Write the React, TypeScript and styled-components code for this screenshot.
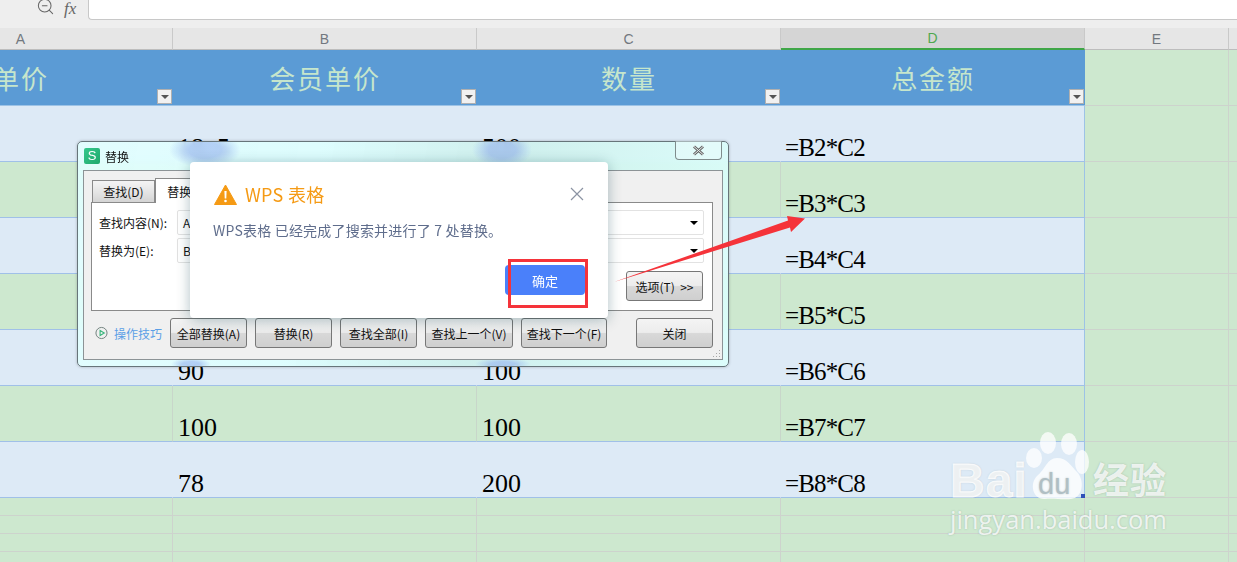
import React from "react";
import styled, { createGlobalStyle } from "styled-components";
import { ZoomOut } from "lucide-react";

const Global = createGlobalStyle`
  html, body { margin: 0; padding: 0; background: #cde8cf; }
  body { font-family: "Noto Sans CJK SC", "Liberation Sans", sans-serif; overflow: hidden; }
`;

const Page = styled.div`
  position: relative;
  width: 1237px;
  height: 562px;
  overflow: hidden;
  background: #cde8cf;
`;

const FormulaBar = styled.div`
  display: flex;
  height: 20px;
  background: #eeeeee;
`;
const BarTools = styled.div`
  width: 88px;
  flex: none;
  display: flex;
  align-items: flex-start;
  padding-left: 36px;
  box-sizing: border-box;
  gap: 9px;
  color: #666;
  svg { margin-top: -3px; }
`;
const Fx = styled.span`
  font: italic 17px/18px "Liberation Serif", serif;
  color: #666;
`;
const FormulaInput = styled.div`
  flex: 1;
  background: #fff;
  border-left: 1px solid #c8c8c8;
  border-bottom: 1px solid #c8c8c8;
  border-bottom-left-radius: 4px;
`;

const Sheet = styled.div`
  margin-left: -131px;
`;
const Columns = "304px 304px 304px 304px 144px 200px";

const Strip = styled.div`
  display: grid;
  grid-template-columns: ${Columns};
  height: 30px;
  align-items: end;
  background: #eeeeee;
`;
const ColHead = styled.div<{ $active?: boolean }>`
  height: 22px;
  box-sizing: border-box;
  display: flex;
  align-items: center;
  justify-content: center;
  font: 14px "Liberation Sans", sans-serif;
  color: ${(p) => (p.$active ? "#4fa84f" : "#72787f")};
  background: ${(p) => (p.$active ? "#d5d5d5" : "#e6e6e6")};
  border-right: 1px solid #c9c9c9;
  border-bottom: ${(p) => (p.$active ? "2px solid #3fa648" : "1px solid #bdbdbd")};
`;

const Row = styled.div<{ $h?: number }>`
  display: grid;
  grid-template-columns: ${Columns};
  height: ${(p) => p.$h ?? 56}px;
`;
const HeadCell = styled.div`
  position: relative;
  box-sizing: border-box;
  background: #5b9bd5;
  border-bottom: 1px solid #9dc3e6;
  color: #c6e6cc;
  font-size: 26px;
  letter-spacing: 1.9px;
  display: flex;
  align-items: center;
  justify-content: center;
`;
const FilterBtn = styled.span`
  position: absolute;
  right: 1px;
  bottom: 1px;
  width: 15px;
  height: 15px;
  box-sizing: border-box;
  background: #f1f1f1;
  border: 1px solid #b0b0b0;
  &::after {
    content: "";
    position: absolute;
    left: 3px;
    top: 5px;
    border-left: 4px solid transparent;
    border-right: 4px solid transparent;
    border-top: 4px solid #555;
  }
`;
const Cell = styled.div<{ $tone: "blue" | "green"; $tight?: boolean }>`
  box-sizing: border-box;
  display: flex;
  align-items: flex-end;
  padding: 0 0 0 ${(p) => (p.$tight ? 4 : 5)}px;
  background: ${(p) => (p.$tone === "blue" ? "#ddeaf6" : "#cde8cf")};
  border-bottom: 1px solid #a0c0e8;
  border-right: 1px solid ${(p) => (p.$tone === "blue" ? "#ddeaf6" : "#c8d6ca")};
  color: #000;
  font: ${(p) => (p.$tight ? 25 : 26)}px/26px "Liberation Serif", serif;
  letter-spacing: ${(p) => (p.$tight ? "-.85px" : "0")};
  white-space: pre;
`;
const LastCell = styled(Cell)`
  border-right-color: #9dc3e6;
`;
const Blank = styled.div`
  box-sizing: border-box;
  background: #cde8cf;
  border-bottom: 1px solid #cdd3cd;
  border-right: 1px solid #cdd3cd;
`;
const SelectionCorner = styled.span`
  position: absolute;
  left: 1081px;
  top: 494px;
  width: 4px;
  height: 4px;
  background: #3050b8;
`;

const OldDialog = styled.div`
  position: absolute;
  left: 77px;
  top: 141px;
  width: 652px;
  height: 226px;
  box-sizing: border-box;
  border: 1px solid #67757a;
  border-radius: 5px;
  background:
    radial-gradient(ellipse 36px 18px at 127px 8px, rgba(150, 180, 240, .6) 45%, transparent),
    radial-gradient(ellipse 30px 18px at 424px 8px, rgba(150, 180, 240, .6) 45%, transparent),
    radial-gradient(ellipse 20px 6px at 113px 222px, rgba(150, 180, 240, .6) 40%, transparent),
    radial-gradient(ellipse 28px 6px at 425px 222px, rgba(150, 180, 240, .6) 40%, transparent),
    linear-gradient(100deg, rgba(226,255,255,.9), rgba(222,255,255,.88) 35%, rgba(205,240,236,.9) 62%, rgba(220,255,252,.9) 100%);
  backdrop-filter: blur(3px);
  box-shadow: 0 0 3px rgba(0,0,0,.25);
`;
const TitleBar = styled.div`
  height: 28px;
  display: flex;
  align-items: center;
  padding-left: 6px;
  gap: 5px;
  font-size: 12px;
  color: #111;
  position: relative;
`;
const LogoS = styled.span`
  width: 16px;
  height: 16px;
  border-radius: 2px;
  background: linear-gradient(135deg, #35c88c, #1ea86c);
  color: #fff;
  font: 13px/16px "Liberation Sans", sans-serif;
  text-align: center;
`;
const CloseTop = styled.span`
  position: absolute;
  right: 6px;
  top: -1px;
  width: 47px;
  height: 19px;
  box-sizing: border-box;
  border: 1px solid #7f8c8c;
  border-top: none;
  border-radius: 0 0 4px 4px;
  background: rgba(240,250,250,.45);
  display: flex;
  align-items: center;
  justify-content: center;
`;
const Panel = styled.div`
  position: relative;
  margin-left: 5px;
  width: 640px;
  height: 190px;
  box-sizing: border-box;
  border: 1px solid #8c9396;
  background: #f0f0f0;
  padding-top: 7px;
`;
const Tabs = styled.div`
  display: flex;
  align-items: flex-end;
  height: 25px;
  padding-left: 8px;
`;
const Tab = styled.div<{ $on?: boolean }>`
  box-sizing: border-box;
  height: ${(p) => (p.$on ? 25 : 23)}px;
  width: ${(p) => (p.$on ? 64 : 63)}px;
  border: 1px solid #8a8a8a;
  border-bottom: ${(p) => (p.$on ? "none" : "1px solid #8a8a8a")};
  background: ${(p) => (p.$on ? "#fff" : "linear-gradient(#f4f4f4, #e4e4e4 55%, #d4d4d4)")};
  font-size: 12px;
  color: #111;
  display: flex;
  align-items: center;
  justify-content: center;
`;
const Content = styled.div`
  margin: -1px 0 0 7px;
  width: 622px;
  height: 109px;
  box-sizing: border-box;
  border: 1px solid #8a8a8a;
  background: #fff;
  padding: 7px 7px 0;
  display: flex;
  flex-direction: column;
  gap: 3px;
`;
const Field = styled.div`
  display: flex;
  align-items: center;
  height: 25px;
`;
const FieldLabel = styled.span`
  width: 78px;
  flex: none;
  font-size: 12px;
  color: #111;
`;
const FieldInput = styled.div`
  width: 527px;
  height: 25px;
  box-sizing: border-box;
  border: 1px solid #e2e2e2;
  border-radius: 2px;
  font-size: 12px;
  color: #111;
  display: flex;
  align-items: center;
  justify-content: space-between;
  padding: 0 5px;
  &::after {
    content: "";
    border-left: 4px solid transparent;
    border-right: 4px solid transparent;
    border-top: 4px solid #000;
  }
`;
const OptionRow = styled.div`
  display: flex;
  justify-content: flex-end;
  margin-top: 5px;
  padding-right: 2px;
`;
const Btn = styled.div<{ $w: number; $h?: number; $ml?: number }>`
  width: ${(p) => p.$w}px;
  height: ${(p) => p.$h ?? 30}px;
  margin-left: ${(p) => p.$ml ?? 0}px;
  flex: none;
  box-sizing: border-box;
  border: 1px solid #777;
  border-radius: 3px;
  background: linear-gradient(#f4f4f4, #ececec 48%, #d8d8d8 52%, #cfcfcf);
  font-size: 12px;
  color: #111;
  display: flex;
  align-items: center;
  justify-content: center;
  white-space: nowrap;
`;
const BottomRow = styled.div`
  display: flex;
  align-items: center;
  gap: 8px;
  padding-left: 11px;
  margin-top: 7px;
`;
const Help = styled.div`
  width: 67px;
  flex: none;
  display: flex;
  align-items: center;
  gap: 6px;
  font-size: 12px;
  color: #5b9fe6;
  white-space: nowrap;
`;
const Grip = styled.svg`
  position: absolute;
  right: 1px;
  bottom: 1px;
`;

const WpsDialog = styled.div`
  position: absolute;
  left: 190px;
  top: 162px;
  width: 418px;
  height: 156px;
  box-sizing: border-box;
  background: #fff;
  border-radius: 4px;
  box-shadow: 0 2px 14px rgba(0, 60, 70, .32);
  padding: 20px 23px 0 23px;
  display: flex;
  flex-direction: column;
`;
const WpsHead = styled.div`
  height: 24px;
  display: flex;
  align-items: center;
  gap: 8px;
  padding-left: 1px;
`;
const WpsTitle = styled.span`
  font-size: 18px;
  color: #f59a14;
  letter-spacing: .3px;
  flex: 1;
`;
const WpsClose = styled.svg`
  margin-right: 1px;
`;
const WpsMsg = styled.div`
  margin-top: 13px;
  height: 22px;
  font-size: 14px;
  line-height: 22px;
  color: #5f6d8c;
  letter-spacing: .2px;
  white-space: nowrap;
`;
const WpsFoot = styled.div`
  margin-top: 24px;
  display: flex;
  justify-content: flex-end;
`;
const OkBtn = styled.div`
  width: 80px;
  height: 30px;
  border-radius: 4px;
  background: #4a80fa;
  color: #fff;
  font-size: 13px;
  display: flex;
  align-items: center;
  justify-content: center;
`;

const RedBox = styled.div`
  position: absolute;
  left: 508px;
  top: 259px;
  width: 80px;
  height: 49px;
  box-sizing: border-box;
  border: 3px solid #f5333a;
`;
const Arrow = styled.svg`
  position: absolute;
  left: 610px;
  top: 210px;
`;

const Watermark = styled.div`
  position: absolute;
  left: 950px;
  top: 430px;
  width: 222px;
  color: rgba(255, 255, 255, .8);
  text-shadow: 0 0 2px rgba(90, 110, 110, .35);
`;
const MarkTop = styled.div`
  display: flex;
  align-items: flex-end;
  height: 72px;
`;
const MarkBai = styled.span`
  font: 900 48px/48px "Liberation Sans", sans-serif;
  letter-spacing: 1px;
  -webkit-text-stroke: 1px rgba(255, 255, 255, .8);
  width: 75px;
  margin-bottom: -3px;
`;
const MarkCn = styled.span`
  font-size: 36px;
  font-weight: 700;
  line-height: 40px;
  letter-spacing: 1px;
  margin-bottom: 4px;
`;
const MarkUrl = styled.div`
  font: 25.5px/30px "Open Sans", sans-serif;
  margin-top: 2px;
  white-space: nowrap;
`;

const rows: { b?: string; c?: string; d: string; tone: "blue" | "green" }[] = [
  { b: "18. 5", c: "500", d: "=B2*C2", tone: "blue" },
  { d: "=B3*C3", tone: "green" },
  { d: "=B4*C4", tone: "blue" },
  { d: "=B5*C5", tone: "green" },
  { b: "90", c: "100", d: "=B6*C6", tone: "blue" },
  { b: "100", c: "100", d: "=B7*C7", tone: "green" },
  { b: "78", c: "200", d: "=B8*C8", tone: "blue" },
];

const heads = ["单价", "会员单价", "数量", "总金额"];
const letters = ["A", "B", "C", "D", "E", ""];

export default function App() {
  return (
    <Page>
      <Global />
      <FormulaBar>
        <BarTools>
          <ZoomOut size={19} strokeWidth={1.3} />
          <Fx>fx</Fx>
        </BarTools>
        <FormulaInput />
      </FormulaBar>
      <Sheet>
        <Strip>
          {letters.map((l, i) => (
            <ColHead key={i} $active={l === "D"}>{l}</ColHead>
          ))}
        </Strip>
        <Row>
          {heads.map((h) => (
            <HeadCell key={h}>
              {h}
              <FilterBtn />
            </HeadCell>
          ))}
          <Blank />
          <Blank />
        </Row>
        {rows.map((r) => (
          <Row key={r.d}>
            <Cell $tone={r.tone} />
            <Cell $tone={r.tone}>{r.b}</Cell>
            <Cell $tone={r.tone}>{r.c}</Cell>
            <LastCell $tone={r.tone} $tight>{r.d}</LastCell>
            <Blank />
            <Blank />
          </Row>
        ))}
        {[0, 1, 2, 3].map((i) => (
          <Row key={i} $h={18}>
            {[0, 1, 2, 3, 4, 5].map((j) => <Blank key={j} />)}
          </Row>
        ))}
      </Sheet>
      <SelectionCorner />

      <OldDialog>
        <TitleBar>
          <LogoS>S</LogoS>
          替换
          <CloseTop>
            <svg width="13" height="11" viewBox="0 0 13 11">
              <path d="M2 1.5l9 8M11 1.5l-9 8" stroke="#666" strokeWidth="3" fill="none" />
              <path d="M2 1.5l9 8M11 1.5l-9 8" stroke="#e8eeee" strokeWidth="1" fill="none" />
            </svg>
          </CloseTop>
        </TitleBar>
        <Panel>
          <Tabs>
            <Tab>查找(D)</Tab>
            <Tab $on>替换(P)</Tab>
          </Tabs>
          <Content>
            <Field>
              <FieldLabel>查找内容(N):</FieldLabel>
              <FieldInput>A</FieldInput>
            </Field>
            <Field>
              <FieldLabel>替换为(E):</FieldLabel>
              <FieldInput>B</FieldInput>
            </Field>
            <OptionRow>
              <Btn $w={77}>选项(T)&nbsp;&nbsp;&gt;&gt;</Btn>
            </OptionRow>
          </Content>
          <BottomRow>
            <Help>
              <svg width="14" height="14" viewBox="0 0 14 14">
                <circle cx="7" cy="7" r="6" fill="none" stroke="#6b7b78" strokeWidth="1" />
                <path d="M5.5 4.2v5.6L10 7z" fill="none" stroke="#35b57a" strokeWidth="1.2" />
              </svg>
              操作技巧
            </Help>
            <Btn $w={77}>全部替换(A)</Btn>
            <Btn $w={77}>替换(R)</Btn>
            <Btn $w={77}>查找全部(I)</Btn>
            <Btn $w={88}>查找上一个(V)</Btn>
            <Btn $w={86}>查找下一个(F)</Btn>
            <Btn $w={77} $ml={21}>关闭</Btn>
          </BottomRow>
          <Grip width="9" height="9" viewBox="0 0 9 9">
            <path d="M7 1h1v1H7zM4 4h1v1H4zM7 4h1v1H7zM1 7h1v1H1zM4 7h1v1H4zM7 7h1v1H7z" fill="#a8a8a8" />
          </Grip>
        </Panel>
      </OldDialog>

      <WpsDialog>
        <WpsHead>
          <svg width="23" height="21" viewBox="0 0 23 21">
            <path d="M11.5 1L22.5 20.5H.5z" fill="#f59a14" stroke="#f59a14" strokeLinejoin="round" />
            <path d="M10.4 7h2.2l-.3 7.6h-1.6z" fill="#fff" />
            <circle cx="11.5" cy="17" r="1.3" fill="#fff" />
          </svg>
          <WpsTitle>WPS 表格</WpsTitle>
          <WpsClose width="14" height="14" viewBox="0 0 14 14">
            <path d="M1 1l12 12M13 1L1 13" stroke="#8b93a3" strokeWidth="1.2" fill="none" />
          </WpsClose>
        </WpsHead>
        <WpsMsg>WPS表格 已经完成了搜索并进行了 7 处替换。</WpsMsg>
        <WpsFoot>
          <OkBtn>确定</OkBtn>
        </WpsFoot>
      </WpsDialog>

      <RedBox />
      <Arrow width="200" height="80" viewBox="0 0 200 80">
        <path d="M4 72L178 10.5L177 6L195 8.5L181 22L180 17.5z" fill="#f5333a" />
      </Arrow>

      <Watermark>
        <MarkTop>
          <MarkBai>Bai</MarkBai>
          <svg width="68" height="72" viewBox="0 0 68 72">
            <ellipse cx="23" cy="13" rx="8" ry="11" fill="#fff" fillOpacity=".75" />
            <ellipse cx="44" cy="14" rx="8" ry="11" fill="#fff" fillOpacity=".75" />
            <ellipse cx="9" cy="28" rx="8" ry="10" fill="#fff" fillOpacity=".75" />
            <ellipse cx="57" cy="32" rx="7" ry="12" fill="#fff" fillOpacity=".75" />
            <path d="M32 28C42 28 46 36 52 42C60 50 58 68 46 69C38 70 28 68 20 69C8 70 4 54 12 46C20 40 22 28 32 28z" fill="#fff" fillOpacity=".78" />
            <text x="13" y="64" fontFamily="Liberation Sans, sans-serif" fontSize="29" fill="#b0bfc4">du</text>
          </svg>
          <MarkCn>经验</MarkCn>
        </MarkTop>
        <MarkUrl>jingyan.baidu.com</MarkUrl>
      </Watermark>
    </Page>
  );
}
